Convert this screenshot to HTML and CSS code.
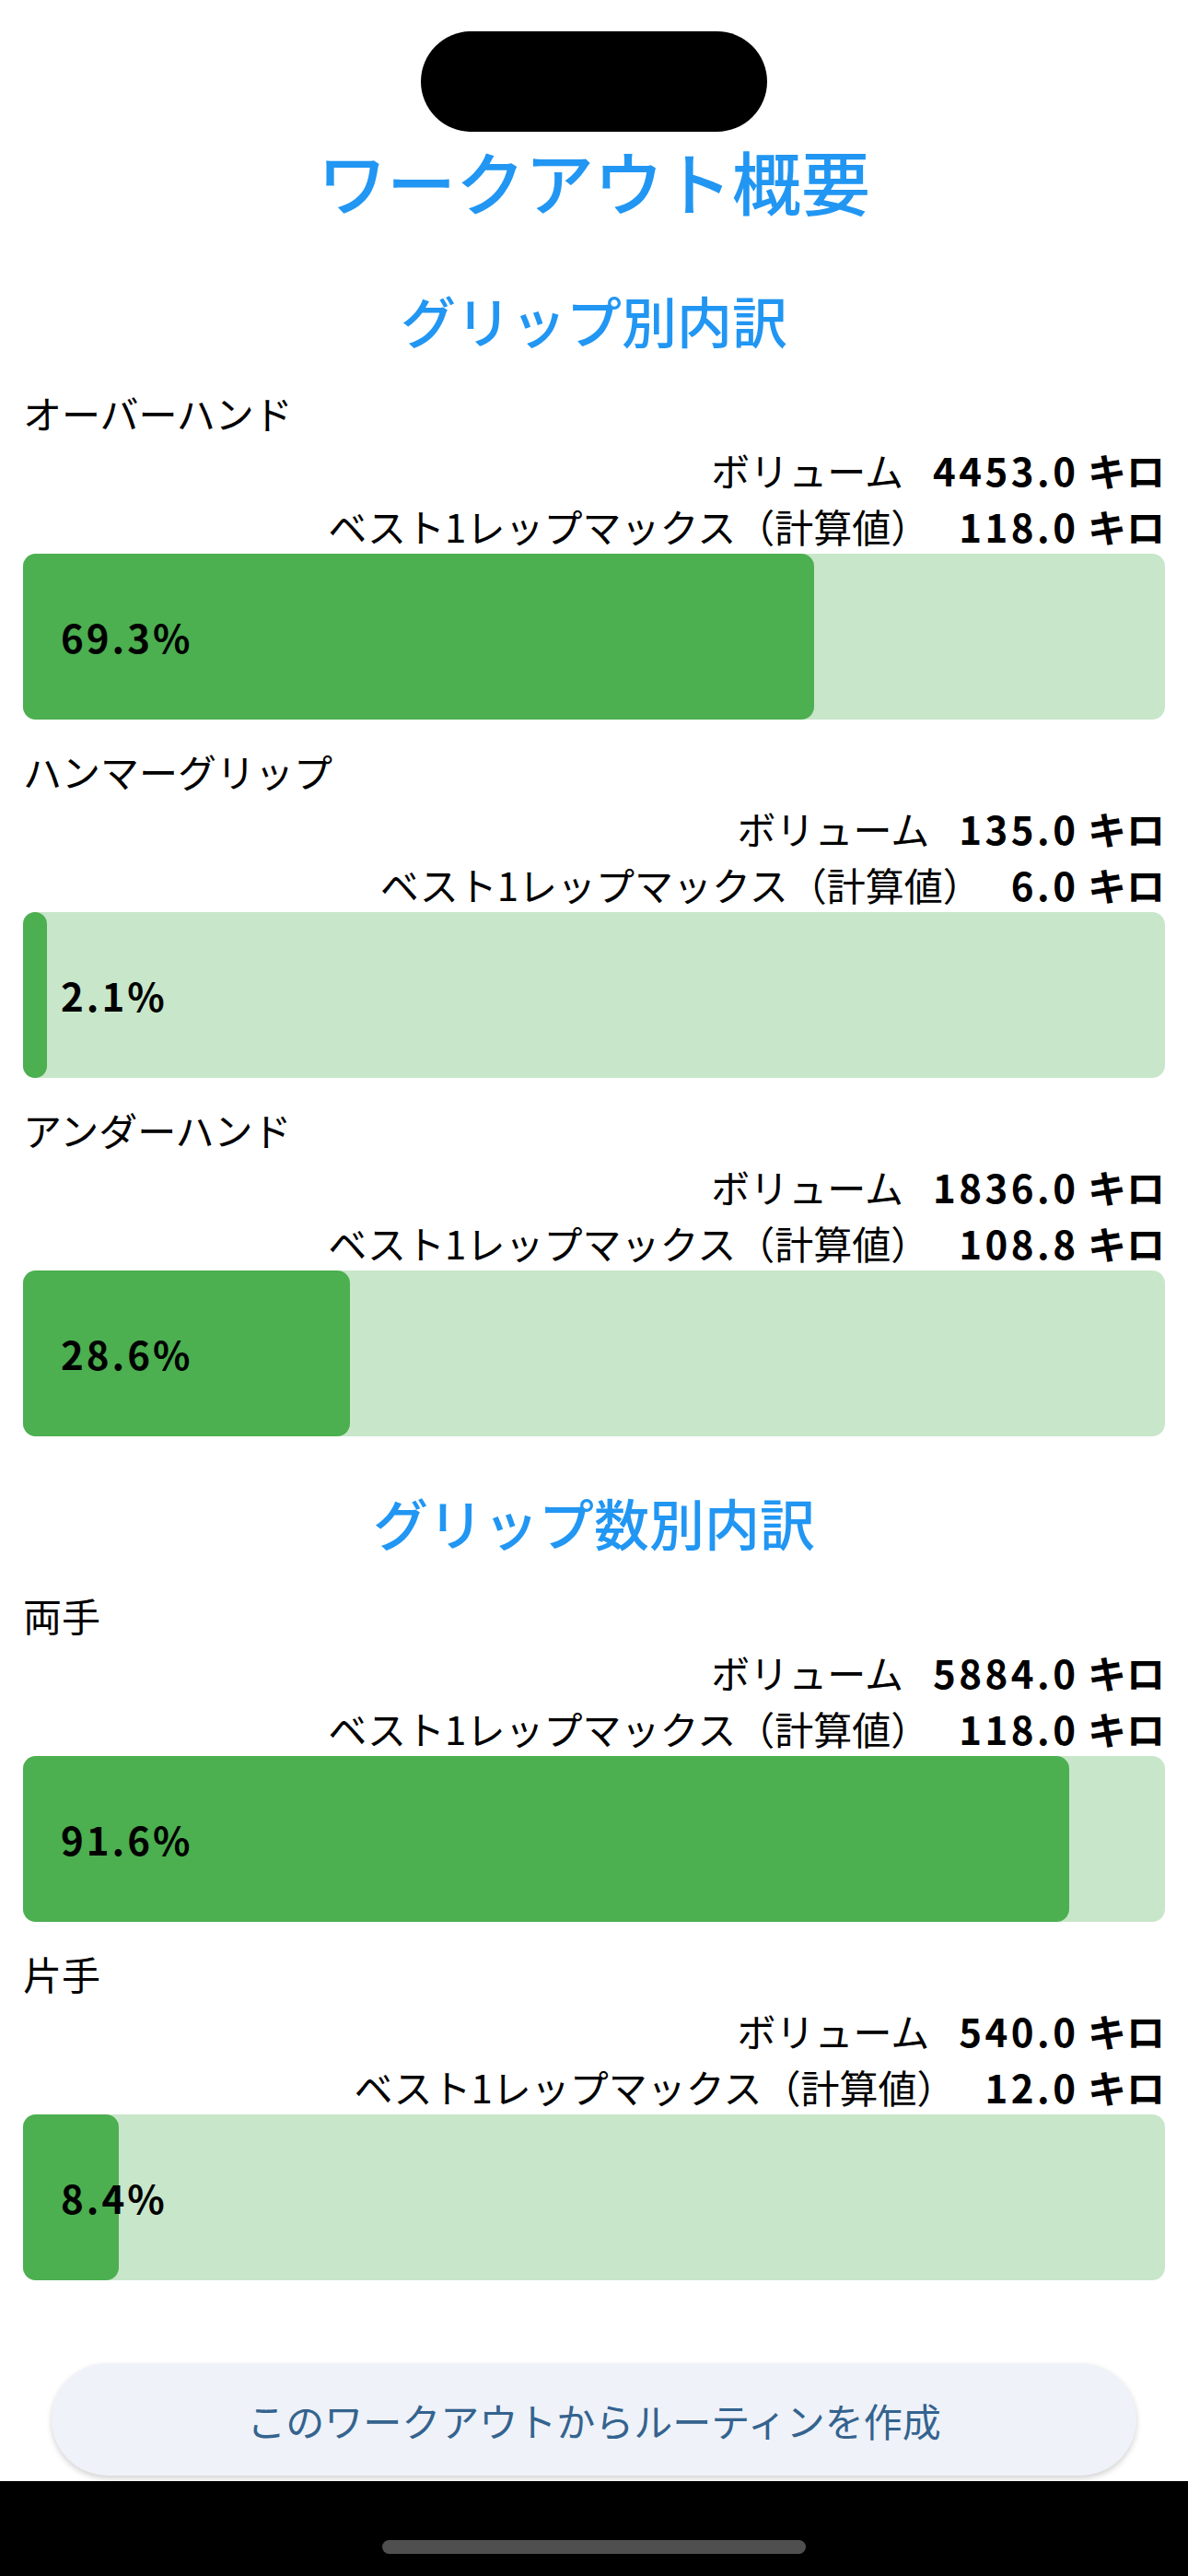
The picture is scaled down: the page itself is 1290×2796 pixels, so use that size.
FILE: index.html
```html
<!DOCTYPE html>
<html lang="ja">
<head>
<meta charset="utf-8">
<title>ワークアウト概要</title>
<link rel="stylesheet" href="styles.css">
</head>
<body>
<div class="screen">
  <div class="island"></div>
  <main class="content">
    <h1 class="title">ワークアウト概要</h1>

    <section class="section">
      <h2 class="section-title">グリップ別内訳</h2>

      <div class="item">
        <div class="item-label">オーバーハンド</div>
        <div class="stats">
          <div class="stat"><span class="stat-name">ボリューム</span><span class="stat-value"><span class="num">4453.0</span> キロ</span></div>
          <div class="stat"><span class="stat-name">ベスト1レップマックス（計算値）</span><span class="stat-value"><span class="num">118.0</span> キロ</span></div>
        </div>
        <div class="bar"><div class="fill" style="width: 69.3%"></div><span class="pct">69.3%</span></div>
      </div>

      <div class="item">
        <div class="item-label">ハンマーグリップ</div>
        <div class="stats">
          <div class="stat"><span class="stat-name">ボリューム</span><span class="stat-value"><span class="num">135.0</span> キロ</span></div>
          <div class="stat"><span class="stat-name">ベスト1レップマックス（計算値）</span><span class="stat-value"><span class="num">6.0</span> キロ</span></div>
        </div>
        <div class="bar"><div class="fill" style="width: 2.1%"></div><span class="pct">2.1%</span></div>
      </div>

      <div class="item">
        <div class="item-label">アンダーハンド</div>
        <div class="stats">
          <div class="stat"><span class="stat-name">ボリューム</span><span class="stat-value"><span class="num">1836.0</span> キロ</span></div>
          <div class="stat"><span class="stat-name">ベスト1レップマックス（計算値）</span><span class="stat-value"><span class="num">108.8</span> キロ</span></div>
        </div>
        <div class="bar"><div class="fill" style="width: 28.6%"></div><span class="pct">28.6%</span></div>
      </div>
    </section>

    <section class="section section-second">
      <h2 class="section-title">グリップ数別内訳</h2>

      <div class="item">
        <div class="item-label">両手</div>
        <div class="stats">
          <div class="stat"><span class="stat-name">ボリューム</span><span class="stat-value"><span class="num">5884.0</span> キロ</span></div>
          <div class="stat"><span class="stat-name">ベスト1レップマックス（計算値）</span><span class="stat-value"><span class="num">118.0</span> キロ</span></div>
        </div>
        <div class="bar"><div class="fill" style="width: 91.6%"></div><span class="pct">91.6%</span></div>
      </div>

      <div class="item">
        <div class="item-label">片手</div>
        <div class="stats">
          <div class="stat"><span class="stat-name">ボリューム</span><span class="stat-value"><span class="num">540.0</span> キロ</span></div>
          <div class="stat"><span class="stat-name">ベスト1レップマックス（計算値）</span><span class="stat-value"><span class="num">12.0</span> キロ</span></div>
        </div>
        <div class="bar"><div class="fill" style="width: 8.4%"></div><span class="pct">8.4%</span></div>
      </div>
    </section>

    <div class="actions">
      <button class="routine-btn" type="button">このワークアウトからルーティンを作成</button>
    </div>
  </main>
  <footer class="home-area"><div class="home-indicator"></div></footer>
</div>
</body>
</html>
```

FILE: styles.css
```css
* {
  box-sizing: border-box;
}

html, body {
  margin: 0;
  padding: 0;
  background: #ffffff;
}

body {
  font-family: "Noto Sans CJK JP", "Noto Sans", sans-serif;
  color: #000000;
}

.screen {
  width: 1290px;
  height: 2796px;
  display: flex;
  flex-direction: column;
  overflow: hidden;
}

.island {
  width: 376px;
  height: 109px;
  margin: 34px auto 0;
  background: #000000;
  border-radius: 55px;
  flex: none;
}

.content {
  flex: 1;
  display: flex;
  flex-direction: column;
  padding: 0 25px;
}

.title {
  margin: 8px 0 0;
  font-size: 75px;
  line-height: 90px;
  font-weight: 500;
  color: #2196f3;
  text-align: center;
}

.section {
  display: flex;
  flex-direction: column;
  gap: 25px;
  margin-top: 71px;
}

.section-second {
  margin-top: 58px;
}

.section-title {
  margin: 0 0 10px;
  font-size: 60px;
  line-height: 70px;
  font-weight: 500;
  color: #2196f3;
  text-align: center;
}

.item {
  display: flex;
  flex-direction: column;
}

.item-label {
  font-size: 42px;
  line-height: 62px;
}

.stats {
  display: flex;
  flex-direction: column;
  align-items: flex-end;
}

.stat {
  display: flex;
  gap: 32px;
  font-size: 42px;
  line-height: 61px;
  white-space: nowrap;
}

.stat-value {
  font-weight: 700;
}

.num {
  letter-spacing: 3.5px;
}

.bar {
  position: relative;
  height: 180px;
  background: #c8e6c9;
  border-radius: 14px;
  display: flex;
  align-items: center;
}

.fill {
  position: absolute;
  left: 0;
  top: 0;
  bottom: 0;
  background: #4caf50;
  border-radius: 14px;
}

.pct {
  position: relative;
  padding-left: 41px;
  font-size: 42px;
  font-weight: 700;
  line-height: 1;
  letter-spacing: 3px;
}

.actions {
  margin-top: auto;
  padding: 0 31px 6px;
}

.routine-btn {
  display: block;
  width: 100%;
  height: 122px;
  border: none;
  border-radius: 61px;
  background: #eff2f8;
  box-shadow: 0 3px 6px rgba(0, 0, 0, 0.18);
  font-family: "Noto Sans CJK JP", "Noto Sans", sans-serif;
  font-size: 42px;
  font-weight: 400;
  color: #34638f;
}

.home-area {
  flex: none;
  height: 103px;
  background: #000000;
  display: flex;
  justify-content: center;
  align-items: flex-start;
}

.home-indicator {
  width: 460px;
  height: 15px;
  margin-top: 64px;
  border-radius: 8px;
  background: #4f4f4f;
}
```
